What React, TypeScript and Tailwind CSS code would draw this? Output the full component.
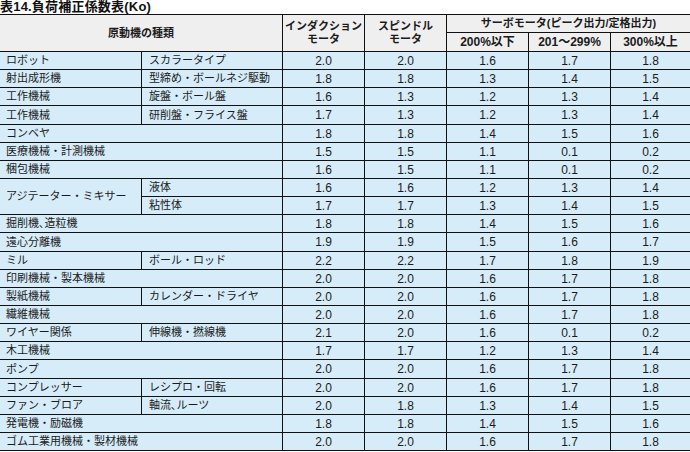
type Row = {
  name?: string;
  sub?: string;
  values: string[];
  full?: boolean;
  tall?: boolean;
};

const rows: Row[] = [
  { name: "ロボット", sub: "スカラータイプ", values: ["2.0", "2.0", "1.6", "1.7", "1.8"] },
  { name: "射出成形機", sub: "型締め・ボールネジ駆動", values: ["1.8", "1.8", "1.3", "1.4", "1.5"] },
  { name: "工作機械", sub: "旋盤・ボール盤", values: ["1.6", "1.3", "1.2", "1.3", "1.4"] },
  { name: "工作機械", sub: "研削盤・フライス盤", values: ["1.7", "1.3", "1.2", "1.3", "1.4"] },
  { name: "コンベヤ", full: true, values: ["1.8", "1.8", "1.4", "1.5", "1.6"] },
  { name: "医療機械・計測機械", full: true, values: ["1.5", "1.5", "1.1", "0.1", "0.2"] },
  { name: "梱包機械", full: true, values: ["1.6", "1.5", "1.1", "0.1", "0.2"] },
  { name: "アジテーター・ミキサー", tall: true, sub: "液体", values: ["1.6", "1.6", "1.2", "1.3", "1.4"] },
  { sub: "粘性体", values: ["1.7", "1.7", "1.3", "1.4", "1.5"] },
  { name: "掘削機､造粒機", full: true, values: ["1.8", "1.8", "1.4", "1.5", "1.6"] },
  { name: "遠心分離機", full: true, values: ["1.9", "1.9", "1.5", "1.6", "1.7"] },
  { name: "ミル", sub: "ボール・ロッド", values: ["2.2", "2.2", "1.7", "1.8", "1.9"] },
  { name: "印刷機械・製本機械", full: true, values: ["2.0", "2.0", "1.6", "1.7", "1.8"] },
  { name: "製紙機械", sub: "カレンダー・ドライヤ", values: ["2.0", "2.0", "1.6", "1.7", "1.8"] },
  { name: "繊維機械", full: true, values: ["2.0", "2.0", "1.6", "1.7", "1.8"] },
  { name: "ワイヤー関係", sub: "伸線機・撚線機", values: ["2.1", "2.0", "1.6", "0.1", "0.2"] },
  { name: "木工機械", full: true, values: ["1.7", "1.7", "1.2", "1.3", "1.4"] },
  { name: "ポンプ", full: true, values: ["2.0", "2.0", "1.6", "1.7", "1.8"] },
  { name: "コンプレッサー", sub: "レシプロ・回転", values: ["2.0", "2.0", "1.6", "1.7", "1.8"] },
  { name: "ファン・ブロア", sub: "軸流､ルーツ", values: ["2.0", "1.8", "1.3", "1.4", "1.5"] },
  { name: "発電機・励磁機", full: true, values: ["1.8", "1.8", "1.4", "1.5", "1.6"] },
  { name: "ゴム工業用機械・製材機械", full: true, values: ["2.0", "2.0", "1.6", "1.7", "1.8"] },
];

const jp = "font-['Liberation_Sans','Noto_Sans_CJK_JP',sans-serif]";
const num = "font-['Liberation_Sans_Narrow','Liberation_Sans',sans-serif]";

const head = `flex items-center justify-center bg-[#efefef] text-[11px] font-bold leading-[13px] text-center text-[#1b1b1b] ${jp}`;
const body = `flex items-center bg-[#d6ecf8] text-[11px] text-[#1b1b1b] ${jp}`;

export default function App() {
  return (
    <div className="w-[690px] h-[452px] bg-white overflow-hidden">
      <div className={`h-[14px] text-[13px] font-bold leading-[14px] text-[#111] tracking-[0.2px] ${jp}`}>
        表14.負荷補正係数表(Ko)
      </div>
      <div className="grid grid-cols-[141px_140px_81px_81px_81px_81px_79px] grid-rows-[17px_18px_17px_17px_17px_18px_17px_17px_17px_17px_17px_17px_18px_17px_17px_17px_17px_17px_17px_18px_17px_17px_17px_17px] gap-px bg-[#111] border-y border-[#111]">
        <div className={`${head} col-span-2 row-span-2`}>原動機の種類</div>
        <div className={`${head} row-span-2`}>
          インダクション
          <br />
          モータ
        </div>
        <div className={`${head} row-span-2`}>
          スピンドル
          <br />
          モータ
        </div>
        <div className={`${head} col-span-3`}>サーボモータ(ピーク出力/定格出力)</div>
        <div className={`${head} text-[12px]`}>200%以下</div>
        <div className={`${head} text-[12px]`}>201～299%</div>
        <div className={`${head} text-[12px]`}>300%以上</div>

        {rows.map((r, i) => (
          <Line key={i} row={r} />
        ))}
      </div>
    </div>
  );
}

function Line({ row }: { row: Row }) {
  return (
    <>
      {row.name && (
        <div
          className={`${body} pl-[6px] ${row.full ? "col-span-2" : ""} ${row.tall ? "row-span-2" : ""}`}
        >
          {row.name}
        </div>
      )}
      {row.sub && <div className={`${body} pl-[7px]`}>{row.sub}</div>}
      {row.values.map((v, j) => (
        <div key={j} className={`${body} justify-center text-[12px] ${num}`}>
          {v}
        </div>
      ))}
    </>
  );
}
